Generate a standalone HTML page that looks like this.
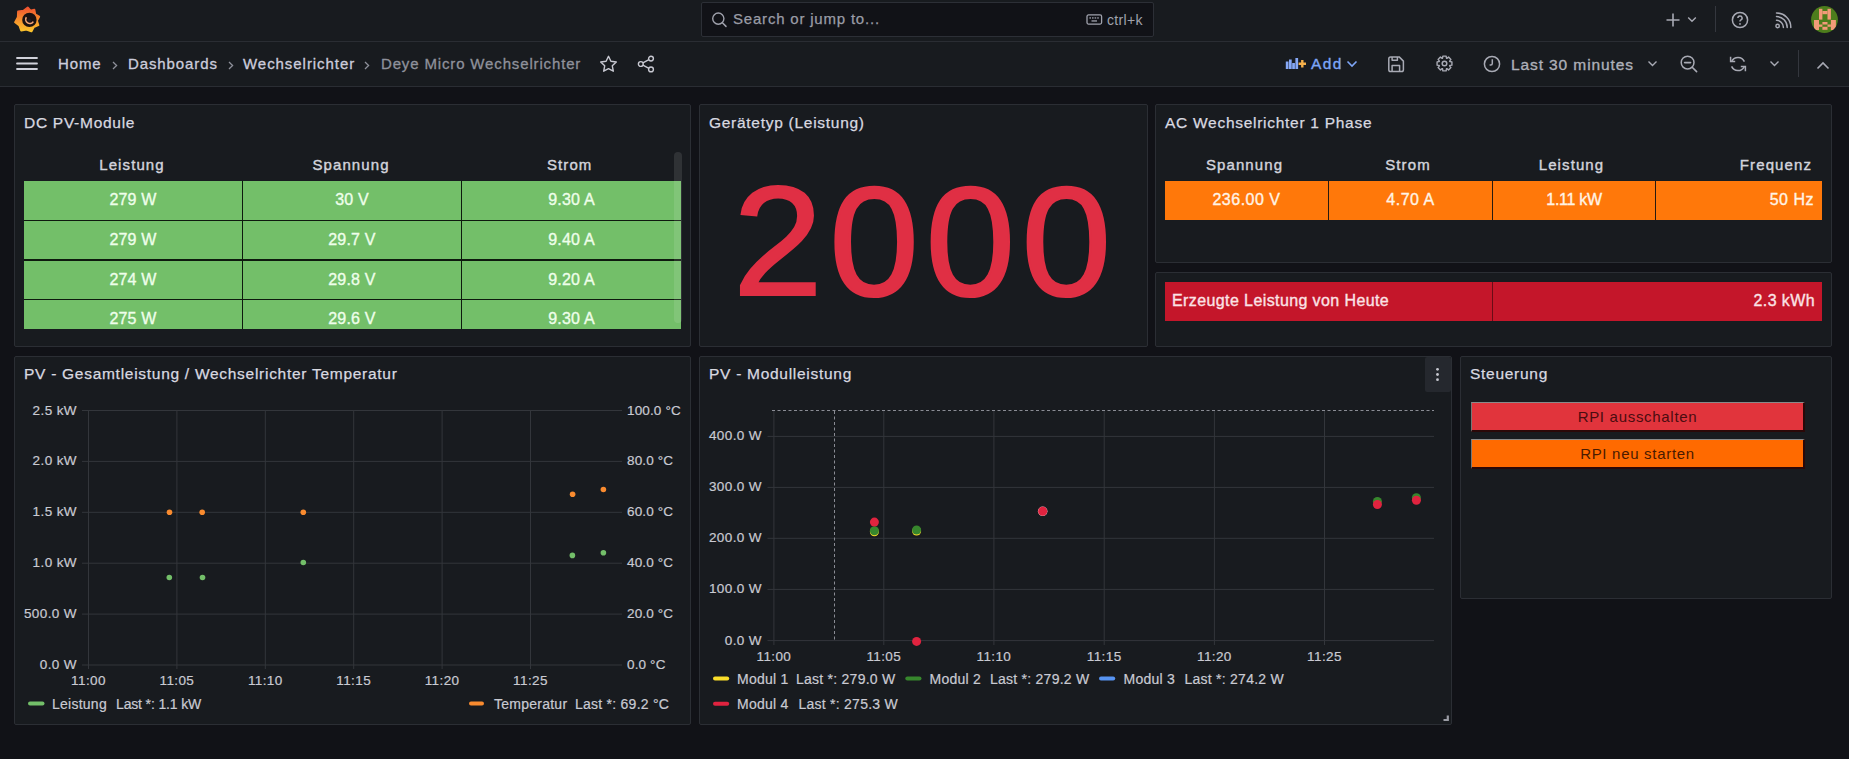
<!DOCTYPE html>
<html><head><meta charset="utf-8">
<style>
*{box-sizing:border-box;margin:0;padding:0}
html,body{width:1849px;height:759px;overflow:hidden;background:#111217;font-family:"Liberation Sans",sans-serif;color:#ccccdc}
.abs{position:absolute}
#topbar{position:absolute;left:0;top:0;width:1849px;height:42px;background:#181b1f;border-bottom:1px solid #2a2d33}
#toolbar{position:absolute;left:0;top:42px;width:1849px;height:45px;background:#181b1f;border-bottom:1px solid #2a2d33}
.panel{position:absolute;background:#181b1f;border:1px solid #2b2e34;border-radius:2px}
.ptitle{position:absolute;left:9px;top:8.5px;font-size:15.5px;letter-spacing:0.72px;-webkit-text-stroke:0.25px #d8d9e0;color:#d8d9e0;white-space:nowrap}
.t{position:absolute;white-space:nowrap}
.btn{position:absolute;width:334px;height:30px;border-style:solid;border-width:1px 2px 2px 1px;border-color:#8a8a8a #2a0808 #2a0808 #777;font-size:15px;letter-spacing:0.7px;text-align:center;line-height:27px;white-space:nowrap}

.ax{position:absolute;font-size:13.5px;letter-spacing:0.4px;color:#c9cad2;-webkit-text-stroke:0.2px #c9cad2;white-space:nowrap;line-height:20px}
.lg{position:absolute;font-size:14px;letter-spacing:0.25px;color:#c9cad2;-webkit-text-stroke:0.2px #c9cad2;white-space:nowrap;line-height:20px}

.oc{position:absolute;top:0;height:39px;background:#ff780a;color:#fff4e6;font-size:16px;letter-spacing:0.5px;-webkit-text-stroke:0.35px #fff4e6;text-align:center;line-height:37.5px;white-space:nowrap}
.rc{position:absolute;top:0;height:39px;color:#fbe3e6;font-size:16px;letter-spacing:0.4px;-webkit-text-stroke:0.35px #fbe3e6;line-height:37px;white-space:nowrap}

.th{position:absolute;top:51px;width:200px;text-align:center;font-size:15px;letter-spacing:1.1px;-webkit-text-stroke:0.4px #d3d4dc;color:#d3d4dc;white-space:nowrap}
.gc{position:absolute;height:38.8px;background:#73bf69;color:#eefeea;font-size:16px;letter-spacing:0.2px;-webkit-text-stroke:0.35px #eefeea;text-align:center;line-height:37.5px;white-space:nowrap}

</style></head>
<body>
<div id="topbar">
<svg class="abs" style="left:14px;top:5px" width="27" height="29" viewBox="0 0 27 29">
<defs><linearGradient id="lg" gradientUnits="userSpaceOnUse" x1="0" y1="2" x2="0" y2="28"><stop offset="0" stop-color="#f05030"/><stop offset="0.5" stop-color="#f6902c"/><stop offset="1" stop-color="#fccb2c"/></linearGradient></defs>
<path d="M13.84 2.62 L16.37 5.74 L20.30 4.88 L21.11 9.36 L25.00 11.72 L22.76 15.72 L24.21 20.06 L19.67 21.89 L17.43 26.24 L12.46 24.37 L7.28 25.46 L5.46 20.47 L1.24 17.23 L3.95 12.24 L4.20 6.56 L9.56 5.92 Z" fill="url(#lg)" stroke="url(#lg)" stroke-width="2.2" stroke-linejoin="round"/>
<circle cx="15.4" cy="14.9" r="7.2" fill="#1a1212"/>
<path d="M12.4 12.2 A3.9 3.9 0 1 0 19.3 16.6" fill="none" stroke="#f3a577" stroke-width="1.6"/>
<circle cx="15.5" cy="15.3" r="1.7" fill="#201a22"/>
</svg>
<div id="search" class="abs" style="left:701px;top:2px;width:453px;height:35px;background:#111217;border:1px solid #2c2f36;border-radius:2px"></div>
<svg class="abs" style="left:711px;top:11px" width="17" height="17" viewBox="0 0 17 17"><circle cx="7.3" cy="7.6" r="5.6" fill="none" stroke="#a0a2ad" stroke-width="1.4"/><path d="M11.4 11.8 L15 15.4" stroke="#a0a2ad" stroke-width="1.5" stroke-linecap="round"/></svg>
<div id="searcht" class="t" style="left:733px;top:10px;font-size:15px;letter-spacing:0.8px;color:#9a9ca6;-webkit-text-stroke:0.25px #9a9ca6">Search or jump to...</div>
<svg class="abs" style="left:1086px;top:14px" width="17" height="11" viewBox="0 0 17 11"><rect x="1" y="0.9" width="14.6" height="9.2" rx="1.5" fill="none" stroke="#a0a2ad" stroke-width="1.3"/><rect x="3.4" y="3.3" width="1.6" height="1.3" fill="#a0a2ad"/><rect x="6" y="3.3" width="1.6" height="1.3" fill="#a0a2ad"/><rect x="8.6" y="3.3" width="1.6" height="1.3" fill="#a0a2ad"/><rect x="11.2" y="3.3" width="1.6" height="1.3" fill="#a0a2ad"/><rect x="5.5" y="6.3" width="5.5" height="1.3" fill="#a0a2ad"/></svg>
<div id="ctrlk" class="t" style="left:1107px;top:12px;font-size:14px;letter-spacing:0.35px;color:#a0a2ad">ctrl+k</div>
<svg class="abs" style="left:1665px;top:12px" width="16" height="16" viewBox="0 0 16 16"><path d="M8 1.5 V14.5 M1.5 8 H14.5" stroke="#a8aab4" stroke-width="1.6"/></svg>
<svg class="abs" style="left:1687px;top:16px" width="10" height="7" viewBox="0 0 10 7"><path d="M1.2 1.5 L5 5.2 L8.8 1.5" fill="none" stroke="#a8aab4" stroke-width="1.4"/></svg>
<div class="abs" style="left:1715px;top:6px;width:1px;height:26px;background:#34373e"></div>
<svg class="abs" style="left:1731px;top:11px" width="18" height="18" viewBox="0 0 18 18"><circle cx="9" cy="9" r="7.6" fill="none" stroke="#a8aab4" stroke-width="1.5"/><path d="M6.9 7.1 A2.1 2.1 0 1 1 9.6 9.1 Q9 9.4 9 10.4" fill="none" stroke="#a8aab4" stroke-width="1.5"/><circle cx="9" cy="12.9" r="0.95" fill="#a8aab4"/></svg>
<svg class="abs" style="left:1775px;top:12px" width="17" height="17" viewBox="0 0 17 17"><circle cx="2.6" cy="14" r="1.7" fill="none" stroke="#a8aab4" stroke-width="1.4"/><path d="M1.5 8.3 A7 7 0 0 1 8.4 15.4 M1.5 4.6 A10.6 10.6 0 0 1 12.2 15.4 M1.5 1 A14.2 14.2 0 0 1 15.8 15.4" fill="none" stroke="#a8aab4" stroke-width="1.5" stroke-linecap="round"/></svg>
<svg class="abs" style="left:1811px;top:6px" width="27" height="27" viewBox="0 0 27 27"><defs><clipPath id="av"><circle cx="13.5" cy="13.5" r="13.4"/></clipPath></defs><circle cx="13.5" cy="13.5" r="13.4" fill="#4d7d1c"/><g clip-path="url(#av)" fill="#f29a78"><rect x="8" y="2.8" width="3.4" height="10.8"/><rect x="16.5" y="2.8" width="3.4" height="10.8"/><rect x="11.4" y="5" width="5.1" height="3.2"/><rect x="3" y="14" width="5" height="10"/><rect x="19.9" y="14" width="5" height="10"/><rect x="8" y="18.5" width="3.4" height="2.3"/><rect x="16.5" y="18.5" width="3.4" height="2.3"/><rect x="11.4" y="16" width="5.1" height="2.5"/><rect x="11.4" y="20.8" width="5.1" height="3"/></g></svg>
</div>
<div id="toolbar">
<svg class="abs" style="left:16px;top:15px" width="22" height="13" viewBox="0 0 22 13"><path d="M1 1 H21 M1 6.5 H21 M1 12 H21" stroke="#d0d1da" stroke-width="1.8" stroke-linecap="round"/></svg>
<div id="bc1" class="t" style="left:58px;top:13px;font-size:15px;letter-spacing:0.9px;color:#ccccdc;-webkit-text-stroke:0.3px #ccccdc">Home</div>
<svg class="abs" style="left:111px;top:19px" width="8" height="9" viewBox="0 0 8 9"><path d="M2 1 L5.6 4.5 L2 8" fill="none" stroke="#8e909a" stroke-width="1.3"/></svg>
<div id="bc2" class="t" style="left:128px;top:13px;font-size:15px;letter-spacing:0.9px;color:#ccccdc;-webkit-text-stroke:0.3px #ccccdc">Dashboards</div>
<svg class="abs" style="left:227px;top:19px" width="8" height="9" viewBox="0 0 8 9"><path d="M2 1 L5.6 4.5 L2 8" fill="none" stroke="#8e909a" stroke-width="1.3"/></svg>
<div id="bc3" class="t" style="left:243px;top:13px;font-size:15px;letter-spacing:0.95px;color:#ccccdc;-webkit-text-stroke:0.3px #ccccdc">Wechselrichter</div>
<svg class="abs" style="left:363px;top:19px" width="8" height="9" viewBox="0 0 8 9"><path d="M2 1 L5.6 4.5 L2 8" fill="none" stroke="#8e909a" stroke-width="1.3"/></svg>
<div id="bc4" class="t" style="left:381px;top:13px;font-size:15px;letter-spacing:0.85px;color:#8f919b;-webkit-text-stroke:0.3px #8f919b">Deye Micro Wechselrichter</div>
<svg class="abs" style="left:599px;top:13px" width="19" height="18" viewBox="0 0 19 18"><path d="M9.5 1.3 L11.9 6.3 L17.3 7 L13.3 10.8 L14.3 16.2 L9.5 13.6 L4.7 16.2 L5.7 10.8 L1.7 7 L7.1 6.3 Z" fill="none" stroke="#c8c9d2" stroke-width="1.4" stroke-linejoin="round"/></svg>
<svg class="abs" style="left:637px;top:13px" width="18" height="18" viewBox="0 0 18 18"><circle cx="3.8" cy="9" r="2.4" fill="none" stroke="#c8c9d2" stroke-width="1.4"/><circle cx="14" cy="3.6" r="2.4" fill="none" stroke="#c8c9d2" stroke-width="1.4"/><circle cx="14" cy="14.4" r="2.4" fill="none" stroke="#c8c9d2" stroke-width="1.4"/><path d="M5.9 7.9 L11.9 4.7 M5.9 10.1 L11.9 13.3" stroke="#c8c9d2" stroke-width="1.4"/></svg>
<svg class="abs" style="left:1285px;top:15px" width="22" height="13" viewBox="0 0 22 13"><g fill="#86a8f5"><rect x="0.8" y="4.5" width="2.7" height="7.5"/><rect x="4" y="2.5" width="2.7" height="9.5"/><rect x="7.2" y="6" width="2.7" height="6"/><rect x="10.4" y="1" width="2.7" height="11"/></g><path d="M17.3 3 V10.4 M13.6 6.7 H21" stroke="#f5b04a" stroke-width="2.4"/></svg>
<div id="addt" class="t" style="left:1311px;top:12.5px;font-size:15.5px;letter-spacing:1.4px;color:#7ea6f7;-webkit-text-stroke:0.35px #7ea6f7">Add</div>
<svg class="abs" style="left:1346px;top:18px" width="12" height="8" viewBox="0 0 12 8"><path d="M1.5 1.5 L6 6 L10.5 1.5" fill="none" stroke="#7ea6f7" stroke-width="1.6"/></svg>
<svg class="abs" style="left:1388px;top:13.5px" width="17" height="17" viewBox="0 0 17 17"><path d="M2.6 0.9 H11.2 L15.4 5.1 V13.8 Q15.4 15.6 13.6 15.6 H2.6 Q0.8 15.6 0.8 13.8 V2.7 Q0.8 0.9 2.6 0.9 Z M4.1 1.2 V4.3 H9.4 V1.2 M4.1 15.4 V9.6 H11.6 V15.4" fill="none" stroke="#a8aab4" stroke-width="1.5" stroke-linejoin="round"/></svg>
<svg class="abs" style="left:1435.5px;top:13.2px" width="17" height="17" viewBox="0 0 17 17"><path d="M6.84 1.08 L10.16 1.08 L10.47 3.26 L10.81 3.40 L12.57 2.08 L14.92 4.43 L13.60 6.19 L13.74 6.53 L15.92 6.84 L15.92 10.16 L13.74 10.47 L13.60 10.81 L14.92 12.57 L12.57 14.92 L10.81 13.60 L10.47 13.74 L10.16 15.92 L6.84 15.92 L6.53 13.74 L6.19 13.60 L4.43 14.92 L2.08 12.57 L3.40 10.81 L3.26 10.47 L1.08 10.16 L1.08 6.84 L3.26 6.53 L3.40 6.19 L2.08 4.43 L4.43 2.08 L6.19 3.40 L6.53 3.26 Z" fill="none" stroke="#a8aab4" stroke-width="1.4" stroke-linejoin="round"/><circle cx="8.5" cy="8.5" r="2.3" fill="none" stroke="#a8aab4" stroke-width="1.5"/></svg>
<svg class="abs" style="left:1483px;top:13px" width="18" height="18" viewBox="0 0 18 18"><circle cx="9" cy="9" r="7.6" fill="none" stroke="#a8aab4" stroke-width="1.5"/><path d="M9.3 4.3 V8.4 Q9.3 9.9 7.8 9.9 H6.6" fill="none" stroke="#a8aab4" stroke-width="1.5"/></svg>
<div id="timet" class="t" style="left:1511px;top:13.5px;font-size:15.5px;letter-spacing:0.9px;color:#aeb0b9;-webkit-text-stroke:0.35px #aeb0b9">Last 30 minutes</div>
<svg class="abs" style="left:1647px;top:18px" width="11" height="8" viewBox="0 0 11 8"><path d="M1.5 1.5 L5.5 5.5 L9.5 1.5" fill="none" stroke="#a8aab4" stroke-width="1.4"/></svg>
<svg class="abs" style="left:1680px;top:13px" width="19" height="18" viewBox="0 0 19 18"><circle cx="7.6" cy="7.6" r="6.4" fill="none" stroke="#a8aab4" stroke-width="1.5"/><path d="M4.6 7.6 H10.6 M12.2 12.3 L16.6 16.6" stroke="#a8aab4" stroke-width="1.6" stroke-linecap="round"/></svg>
<svg class="abs" style="left:1729px;top:13px" width="18" height="18" viewBox="0 0 18 18"><path d="M2.8 6.2 A7 7 0 0 1 15.4 6.6 M15.2 11.8 A7 7 0 0 1 2.6 11.4" fill="none" stroke="#a8aab4" stroke-width="1.5"/><path d="M1.6 1.8 V6.6 H6.2 M16.4 16.2 V11.4 H11.8" fill="none" stroke="#a8aab4" stroke-width="1.5"/></svg>
<svg class="abs" style="left:1769px;top:18px" width="11" height="8" viewBox="0 0 11 8"><path d="M1.5 1.5 L5.5 5.5 L9.5 1.5" fill="none" stroke="#a8aab4" stroke-width="1.4"/></svg>
<div class="abs" style="left:1798px;top:8px;width:1px;height:27px;background:#34373e"></div>
<svg class="abs" style="left:1816px;top:19px" width="14" height="9" viewBox="0 0 14 9"><path d="M1.5 7.5 L7 2 L12.5 7.5" fill="none" stroke="#a8aab4" stroke-width="1.6"/></svg>
</div>

<div id="p1" class="panel" style="left:14px;top:104px;width:677px;height:243px"><div id="p1t" class="ptitle">DC PV-Module</div>
<div class="th" style="left:17px">Leistung</div><div class="th" style="left:236px">Spannung</div><div class="th" style="left:454.70000000000005px">Strom</div>
<div class="abs" style="left:9px;top:76px;width:657px;height:148px;overflow:hidden;background:#0e1a0e"><div class="gc" style="left:0px;top:0px;width:218px;height:39px">279 W</div><div class="gc" style="left:219px;top:0px;width:218px;height:39px">30 V</div><div class="gc" style="left:438px;top:0px;width:219px;height:39px">9.30 A</div><div class="gc" style="left:0px;top:40px;width:218px;height:38px">279 W</div><div class="gc" style="left:219px;top:40px;width:218px;height:38px">29.7 V</div><div class="gc" style="left:438px;top:40px;width:219px;height:38px">9.40 A</div><div class="gc" style="left:0px;top:80px;width:218px;height:38px">274 W</div><div class="gc" style="left:219px;top:80px;width:218px;height:38px">29.8 V</div><div class="gc" style="left:438px;top:80px;width:219px;height:38px">9.20 A</div><div class="gc" style="left:0px;top:119px;width:218px;height:40px">275 W</div><div class="gc" style="left:219px;top:119px;width:218px;height:40px">29.6 V</div><div class="gc" style="left:438px;top:119px;width:219px;height:40px">9.30 A</div></div>
<div class="abs" style="left:658.5px;top:46.5px;width:8.5px;height:171px;border-radius:4px;background:rgba(255,255,255,0.1)"></div>
</div>
<div id="p2" class="panel" style="left:699px;top:104px;width:449px;height:243px"><div id="p2t" class="ptitle">Gerätetyp (Leistung)</div><div id="big" class="t" style="left:32.8px;top:58.5px;font-size:155px;line-height:155px;color:#e02f44;-webkit-text-stroke:2.2px #e02f44;letter-spacing:6.3px;transform:scaleX(1.04);transform-origin:0 0">2000</div></div>
<div id="p3" class="panel" style="left:1155px;top:104px;width:677px;height:159px"><div class="ptitle">AC Wechselrichter 1 Phase</div>
<div class="th" style="left:-11.5px">Spannung</div><div class="th" style="left:152px">Strom</div><div class="th" style="left:315.5px">Leistung</div><div class="th" style="left:auto;right:19px;width:auto">Frequenz</div>
<div class="abs" style="left:9px;top:76px;width:657px;height:39px;background:#261a10"><div class="oc" style="left:0px;width:163px;">236.00 V</div><div class="oc" style="left:164px;width:163px;">4.70 A</div><div class="oc" style="left:328px;width:162px;letter-spacing:-0.3px;">1.11 kW</div><div class="oc" style="left:491px;width:166px;text-align:right;padding-right:8px">50 Hz</div></div>
</div>
<div id="p4" class="panel" style="left:1155px;top:272px;width:677px;height:75px"><div class="abs" style="left:9px;top:9px;width:657px;height:39px;background:#c4162a"><div class="rc" style="left:7px">Erzeugte Leistung von Heute</div><div class="abs" style="left:327px;top:0;width:1px;height:39px;background:#6a0c16"></div><div class="rc" style="right:7px">2.3 kWh</div></div></div>
<div id="p5" class="panel" style="left:14px;top:356px;width:677px;height:369px"><div class="ptitle" style="top:7.5px">PV - Gesamtleistung / Wechselrichter Temperatur</div></div>
<div id="p6" class="panel" style="left:699px;top:356px;width:753px;height:369px"><div class="ptitle" style="top:7.5px">PV - Modulleistung</div></div>
<div id="p7" class="panel" style="left:1460px;top:356px;width:372px;height:243px"><div class="ptitle" style="top:7.5px">Steuerung</div></div>
<!-- P5 chart -->
<svg class="abs" style="left:0;top:0" width="1849" height="759"><line x1="82" y1="410.5" x2="622" y2="410.5" stroke="#33363b" stroke-width="1"/><line x1="82" y1="461.4" x2="622" y2="461.4" stroke="#33363b" stroke-width="1"/><line x1="82" y1="512.3" x2="622" y2="512.3" stroke="#33363b" stroke-width="1"/><line x1="82" y1="563.2" x2="622" y2="563.2" stroke="#33363b" stroke-width="1"/><line x1="82" y1="614.1" x2="622" y2="614.1" stroke="#33363b" stroke-width="1"/><line x1="82" y1="665" x2="622" y2="665" stroke="#33363b" stroke-width="1"/><line x1="88.5" y1="410" x2="88.5" y2="669" stroke="#33363b" stroke-width="1"/><line x1="176.9" y1="410" x2="176.9" y2="669" stroke="#33363b" stroke-width="1"/><line x1="265.3" y1="410" x2="265.3" y2="669" stroke="#33363b" stroke-width="1"/><line x1="353.7" y1="410" x2="353.7" y2="669" stroke="#33363b" stroke-width="1"/><line x1="442.1" y1="410" x2="442.1" y2="669" stroke="#33363b" stroke-width="1"/><line x1="530.5" y1="410" x2="530.5" y2="669" stroke="#33363b" stroke-width="1"/><circle cx="169.5" cy="512.3" r="2.8" fill="#f98b2f"/><circle cx="202.2" cy="512.3" r="2.8" fill="#f98b2f"/><circle cx="303.3" cy="512.3" r="2.8" fill="#f98b2f"/><circle cx="572.6" cy="494.3" r="2.8" fill="#f98b2f"/><circle cx="603.4" cy="489.5" r="2.8" fill="#f98b2f"/><circle cx="169.3" cy="577.5" r="2.8" fill="#73bf69"/><circle cx="202.5" cy="577.5" r="2.8" fill="#73bf69"/><circle cx="303.3" cy="562.5" r="2.8" fill="#73bf69"/><circle cx="572.4" cy="555.4" r="2.8" fill="#73bf69"/><circle cx="603.4" cy="552.7" r="2.8" fill="#73bf69"/><line x1="30" y1="703.5" x2="42.5" y2="703.5" stroke="#73bf69" stroke-width="4" stroke-linecap="round"/><line x1="471" y1="703.5" x2="482" y2="703.5" stroke="#f98b2f" stroke-width="4" stroke-linecap="round"/></svg>
<div class="ax" style="right:1772px;top:400.5px">2.5 kW</div>
<div class="ax" style="right:1772px;top:451.4px">2.0 kW</div>
<div class="ax" style="right:1772px;top:502.29999999999995px">1.5 kW</div>
<div class="ax" style="right:1772px;top:553.2px">1.0 kW</div>
<div class="ax" style="right:1772px;top:604.1px">500.0 W</div>
<div class="ax" style="right:1772px;top:655px">0.0 W</div>
<div class="ax" style="left:627px;letter-spacing:0.15px;top:400.5px">100.0 °C</div>
<div class="ax" style="left:627px;letter-spacing:0.15px;top:451.4px">80.0 °C</div>
<div class="ax" style="left:627px;letter-spacing:0.15px;top:502.29999999999995px">60.0 °C</div>
<div class="ax" style="left:627px;letter-spacing:0.15px;top:553.2px">40.0 °C</div>
<div class="ax" style="left:627px;letter-spacing:0.15px;top:604.1px">20.0 °C</div>
<div class="ax" style="left:627px;letter-spacing:0.15px;top:655px">0.0 °C</div>
<div class="ax" style="left:48.5px;width:80px;text-align:center;top:670.8px">11:00</div>
<div class="ax" style="left:136.9px;width:80px;text-align:center;top:670.8px">11:05</div>
<div class="ax" style="left:225.3px;width:80px;text-align:center;top:670.8px">11:10</div>
<div class="ax" style="left:313.7px;width:80px;text-align:center;top:670.8px">11:15</div>
<div class="ax" style="left:402.1px;width:80px;text-align:center;top:670.8px">11:20</div>
<div class="ax" style="left:490.5px;width:80px;text-align:center;top:670.8px">11:25</div>
<div class="lg" style="left:52px;top:694px">Leistung</div><div class="lg" style="left:116px;top:694px;letter-spacing:-0.15px">Last *: 1.1 kW</div>
<div class="lg" style="left:494px;top:694px">Temperatur</div><div class="lg" style="left:575px;top:694px">Last *: 69.2 °C</div>
<!-- P6 chart -->
<svg class="abs" style="left:0;top:0" width="1849" height="759"><line x1="767.5" y1="436.4" x2="1434" y2="436.4" stroke="#33363b" stroke-width="1"/><line x1="767.5" y1="487.4" x2="1434" y2="487.4" stroke="#33363b" stroke-width="1"/><line x1="767.5" y1="538.3" x2="1434" y2="538.3" stroke="#33363b" stroke-width="1"/><line x1="767.5" y1="589.4" x2="1434" y2="589.4" stroke="#33363b" stroke-width="1"/><line x1="767.5" y1="640.6" x2="1434" y2="640.6" stroke="#33363b" stroke-width="1"/><line x1="773.9" y1="411" x2="773.9" y2="645" stroke="#33363b" stroke-width="1"/><line x1="883.8" y1="411" x2="883.8" y2="645" stroke="#33363b" stroke-width="1"/><line x1="993.9" y1="411" x2="993.9" y2="645" stroke="#33363b" stroke-width="1"/><line x1="1104.2" y1="411" x2="1104.2" y2="645" stroke="#33363b" stroke-width="1"/><line x1="1214.4" y1="411" x2="1214.4" y2="645" stroke="#33363b" stroke-width="1"/><line x1="1324.5" y1="411" x2="1324.5" y2="645" stroke="#33363b" stroke-width="1"/><line x1="772" y1="410.5" x2="1434" y2="410.5" stroke="#8a8c94" stroke-width="1" stroke-dasharray="3 2.5"/><line x1="834.5" y1="411" x2="834.5" y2="641" stroke="#8a8c94" stroke-width="1" stroke-dasharray="3 2.5"/><circle cx="874.4" cy="531.8" r="4.5" fill="#fade2a"/><circle cx="874.4" cy="530.8" r="4.5" fill="#37872d"/><circle cx="874.4" cy="522.1" r="4.5" fill="#e0233f"/><circle cx="916.6" cy="531" r="4.5" fill="#fade2a"/><circle cx="916.6" cy="530" r="4.5" fill="#37872d"/><circle cx="916.6" cy="641.4" r="4.5" fill="#e0233f"/><circle cx="1042.7" cy="511.3" r="4.8" fill="#f2c0c8"/><circle cx="1042.7" cy="511.3" r="4.5" fill="#e0233f"/><circle cx="1377.4" cy="501.5" r="4.5" fill="#37872d"/><circle cx="1377.4" cy="504.5" r="4.5" fill="#e0233f"/><circle cx="1416.4" cy="497.8" r="4.5" fill="#37872d"/><circle cx="1416.4" cy="500.3" r="4.5" fill="#e0233f"/><line x1="715" y1="678.5" x2="727.2" y2="678.5" stroke="#fade2a" stroke-width="4" stroke-linecap="round"/><line x1="907.3" y1="678.5" x2="919.5" y2="678.5" stroke="#37872d" stroke-width="4" stroke-linecap="round"/><line x1="1101" y1="678.5" x2="1113.2" y2="678.5" stroke="#5794f2" stroke-width="4" stroke-linecap="round"/><line x1="715" y1="703.8" x2="727.2" y2="703.8" stroke="#e0233f" stroke-width="4" stroke-linecap="round"/><path d="M1447.8 715.5 V720 H1443.5" fill="none" stroke="#9a9ca4" stroke-width="2.2"/></svg>
<div class="ax" style="right:1087px;top:426.4px">400.0 W</div>
<div class="ax" style="right:1087px;top:477.4px">300.0 W</div>
<div class="ax" style="right:1087px;top:528.3px">200.0 W</div>
<div class="ax" style="right:1087px;top:579.4px">100.0 W</div>
<div class="ax" style="right:1087px;top:630.6px">0.0 W</div>
<div class="ax" style="left:733.9px;width:80px;text-align:center;top:647px">11:00</div>
<div class="ax" style="left:843.8px;width:80px;text-align:center;top:647px">11:05</div>
<div class="ax" style="left:953.9px;width:80px;text-align:center;top:647px">11:10</div>
<div class="ax" style="left:1064.2px;width:80px;text-align:center;top:647px">11:15</div>
<div class="ax" style="left:1174.4px;width:80px;text-align:center;top:647px">11:20</div>
<div class="ax" style="left:1284.5px;width:80px;text-align:center;top:647px">11:25</div>
<div class="lg" style="left:737px;top:669px">Modul 1</div><div class="lg" style="left:796px;top:669px">Last *: 279.0 W</div>
<div class="lg" style="left:929.5px;top:669px">Modul 2</div><div class="lg" style="left:990px;top:669px">Last *: 279.2 W</div>
<div class="lg" style="left:1123.5px;top:669px">Modul 3</div><div class="lg" style="left:1184.5px;top:669px">Last *: 274.2 W</div>
<div class="lg" style="left:737px;top:694px">Modul 4</div><div class="lg" style="left:798.5px;top:694px">Last *: 275.3 W</div>
<div class="abs" style="left:1425px;top:357px;width:26px;height:34.5px;background:#25282e;border-radius:2px"></div><svg class="abs" style="left:1425px;top:357px" width="26" height="35"><circle cx="12.5" cy="12.3" r="1.4" fill="#c5c6ce"/><circle cx="12.5" cy="17.5" r="1.4" fill="#c5c6ce"/><circle cx="12.5" cy="22.7" r="1.4" fill="#c5c6ce"/></svg>
<!-- P7 -->
<div class="btn" style="left:1471px;top:402px;background:#e1343c;color:#4a0c10">RPI ausschalten</div>
<div class="btn" style="left:1471px;top:439px;background:#ff6a00;color:#4a1a00">RPI neu starten</div>
</body></html>
